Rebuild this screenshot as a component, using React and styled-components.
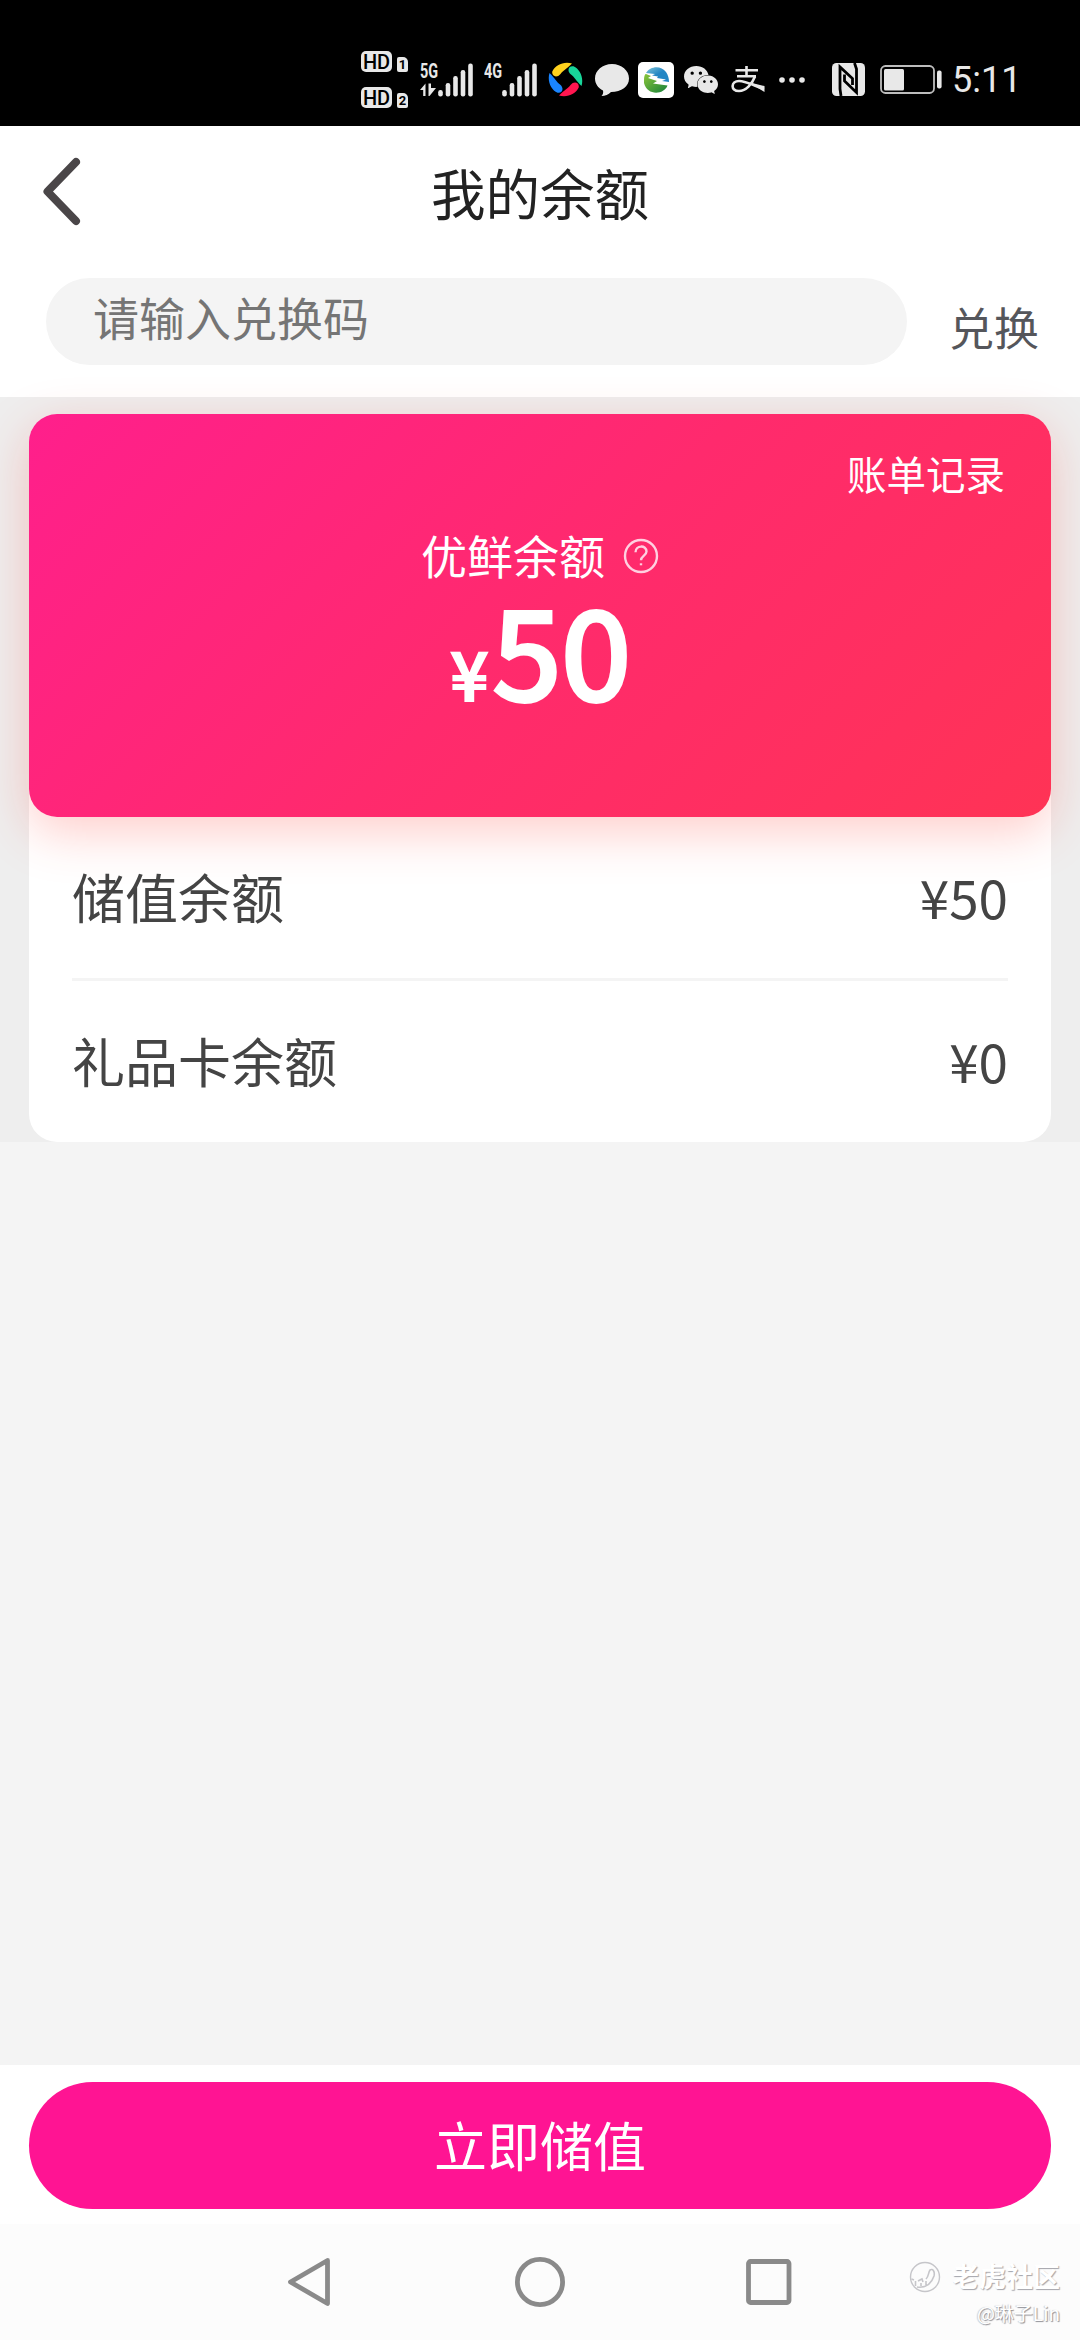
import React from 'react'
import styled, { createGlobalStyle } from 'styled-components'
// Icons
import { SiWechat } from 'react-icons/si'

function App() {
    return (
        <>
            <GlobalStyle />
            <Page>
                <StatusBar />
                <Header>
                    <BackIcon viewBox="0 0 40 70">
                        <path d="M35 5 L6.500 34.500 L35 64" />
                    </BackIcon>
                    <Title>我的余额</Title>
                </Header>
                <Redeem>
                    <CodeInput placeholder="请输入兑换码" />
                    <RedeemButton>兑换</RedeemButton>
                </Redeem>
                <Balance>
                    <Panel>
                        <Card>
                            <Records>账单记录</Records>
                            <CardLabel>
                                优鲜余额
                                <HelpIcon viewBox="0 0 36 36">
                                    <circle cx="18" cy="18" r="16" />
                                    <path d="M12.500 14.200 C12.500 6.800 23.500 6.800 23.500 13.600 C23.500 17.500 18 17.800 18 22.300" />
                                    <path d="M18 25.300 V27.300" />
                                </HelpIcon>
                            </CardLabel>
                            <Amount>
                                <small>¥</small>50
                            </Amount>
                        </Card>
                        <List>
                            <Row>
                                <span>储值余额</span>
                                <span>¥50</span>
                            </Row>
                            <Row>
                                <span>礼品卡余额</span>
                                <span>¥0</span>
                            </Row>
                        </List>
                    </Panel>
                </Balance>
                <Footer>
                    <PayButton>立即储值</PayButton>
                </Footer>
                <NavBar>
                    <NavIcon viewBox="0 0 50 50">
                        <path d="M41.500 3.500 L4.500 25 L41.500 46.500 Z" />
                    </NavIcon>
                    <NavIcon viewBox="0 0 50 50">
                        <circle cx="25" cy="25" r="22.600" />
                    </NavIcon>
                    <NavIcon viewBox="0 0 50 50">
                        <rect x="4.500" y="4.500" width="40.500" height="41" rx="2" />
                    </NavIcon>
                    <Watermark />
                </NavBar>
            </Page>
        </>
    )
}

const petals = ['#ffd21e', '#18d69a', '#ff1650', '#1a85ff']

function StatusBar() {
    return (
        <StatusWrapper>
            <HdGroup>
                <HdLine>
                    <Hd>HD</Hd>
                    <Sim>1</Sim>
                </HdLine>
                <HdLine>
                    <Hd>HD</Hd>
                    <Sim>2</Sim>
                </HdLine>
            </HdGroup>
            <Signal label="5G" arrows ml={12} />
            <Signal label="4G" ml={10} />
            <Icon w={35} h={35} ml={10} viewBox="0 0 35 35">
                {petals.map((color, i) => (
                    <path
                        key={color}
                        fill={color}
                        transform={`rotate(${i * 90} 17.5 17.5)`}
                        d="M24 1.500 C16 -1 7 3 4.300 9.500 C3.300 14.500 9 16.500 12.500 12 C15 8.500 18 7.500 24 1.500 Z"
                    />
                ))}
            </Icon>
            <Icon w={34} h={32} ml={12} viewBox="0 0 34 32">
                <path fill="#e8e8e8" d="M17 0 C26.500 0 34 6.500 34 14.500 C34 22.500 26.500 28 16 28 C13.500 30.500 10 32 6.500 32 C8 30.500 8.500 28.500 8 26.500 C3 24 0 19.500 0 14.500 C0 6.500 7.500 0 17 0 Z" />
            </Icon>
            <Icon w={36} h={36} ml={9} viewBox="0 0 36 36">
                <defs>
                    <linearGradient id="sky" x1="0" y1="0" x2="1" y2="1">
                        <stop offset="0" stopColor="#7fc4d8" />
                        <stop offset="0.5" stopColor="#2386c4" />
                    </linearGradient>
                    <linearGradient id="land" x1="0" y1="0" x2="1" y2="1">
                        <stop offset="0" stopColor="#8bc63a" />
                        <stop offset="1" stopColor="#17803a" />
                    </linearGradient>
                </defs>
                <rect width="36" height="36" rx="5" fill="#fff" />
                <path fill="url(#sky)" d="M8 11 C12 4 23 3 28 10 C30 13 31 16 31 20 L24 19 L28 17.500 L19 16 L20 14.500 L14 13.500 L17 12 Z" />
                <path fill="url(#land)" d="M6 18 C6 14 7 11.500 8 12 L13 14 L10 16 L19 19 L15 21.500 L29.500 23.500 C26 33 9 34 6 21 Z" />
            </Icon>
            <WechatIcon />
            <Icon w={34} h={27} ml={13} viewBox="0 0 34 27">
                <g fill="none" stroke="#e8e8e8" strokeWidth="2.600">
                    <path d="M4.500 4.300 H27 M15.500 0 V10 M6 10.300 H25" />
                    <path d="M24 10.500 C21 18 15 25 8 25 C-1 25 0 15 8 15 C15 15 24 20 33 23" />
                </g>
                <path fill="#e8e8e8" d="M18 16.200 L33.500 20 V26 Z" />
            </Icon>
            <Icon w={26} h={6} ml={14} viewBox="0 0 26 6">
                <circle cx="3" cy="3" r="2.800" fill="#e8e8e8" />
                <circle cx="13" cy="3" r="2.800" fill="#e8e8e8" />
                <circle cx="23" cy="3" r="2.800" fill="#e8e8e8" />
            </Icon>
            <Icon w={33} h={33} ml={27} viewBox="0 0 33 33">
                <rect width="33" height="33" rx="4.500" fill="#e8e8e8" />
                <g fill="none" stroke="#000" strokeWidth="2.800">
                    <path d="M9 33 L8 26 V4 L20.500 15.500 V22" />
                    <path d="M22.500 0 L24.500 6 V29.500 L12.500 18 V11.500" />
                </g>
            </Icon>
            <Icon w={62} h={29} ml={15} viewBox="0 0 62 29">
                <rect x="1" y="1" width="53" height="27" rx="4.500" fill="none" stroke="#bdbdbd" strokeWidth="1.800" />
                <rect x="4" y="4" width="20" height="21.500" rx="1.500" fill="#e8e8e8" />
                <rect x="57" y="5.500" width="4.600" height="18" rx="2" fill="#e8e8e8" />
            </Icon>
            <Clock>5:11</Clock>
        </StatusWrapper>
    )
}

function Signal({ label, arrows, ml }) {
    const tops = [27, 20, 13, 7, 0.5]
    return (
        <SignalWrapper $ml={ml}>
            <Network>{label}</Network>
            <Bars viewBox="0 0 54 34">
                {arrows && (
                    <path fill="#e8e8e8" d="M0 27 L5.500 20.500 V33 H3.200 V27 Z M8.500 20.500 H11 V25 H16 L9.500 33 H8.500 Z" />
                )}
                {tops.map((y, i) => (
                    <rect key={y} x={18.200 + i * 7.500} y={y} width="4.600" height={33.500 - y} rx="2.200" fill="#e8e8e8" />
                ))}
            </Bars>
        </SignalWrapper>
    )
}

function Watermark() {
    return (
        <WatermarkWrapper>
            <Brand>
                <svg width="32" height="32" viewBox="0 0 32 32" fill="none" stroke="#c6c6ca">
                    <circle cx="16" cy="16" r="14.500" strokeWidth="1.400" />
                    <path d="M2.500 18 L5 19 M6.500 20 V25 M9 20 L13 18 L14 21 M8 26 C16 27 22 24 25 15 C26 11 24 7 21 9 C19 12 20 15 17 18 M12 22 V25 M17 20 V24" strokeWidth="1.600" />
                </svg>
                <span>老虎社区</span>
            </Brand>
            <Author>@琳子Lin</Author>
        </WatermarkWrapper>
    )
}

const Icon = ({ w, h, ml, children, ...rest }) => (
    <IconSvg $w={w} $h={h} $ml={ml} {...rest}>
        {children}
    </IconSvg>
)

const GlobalStyle = createGlobalStyle`
    * {
        box-sizing: border-box;
    }
    body {
        margin: 0;
        background: #f4f4f4;
        font-family: 'Noto Sans CJK SC', sans-serif;
    }
`
const Page = styled.div`
    width: 1080px;
    height: 2340px;
    display: flex;
    flex-direction: column;
    background: #f4f4f4;
    overflow: hidden;
`
const StatusWrapper = styled.div`
    height: 126px;
    flex: none;
    display: flex;
    align-items: center;
    padding: 33px 0 0 361px;
    background: #000;
    color: #e8e8e8;
`
const HdGroup = styled.div`
    display: flex;
    flex-direction: column;
    gap: 15px;
`
const HdLine = styled.div`
    display: flex;
    align-items: flex-end;
    gap: 5px;
`
const Hd = styled.span`
    width: 31px;
    height: 21px;
    border-radius: 5px;
    background: #e8e8e8;
    color: #000;
    font: 500 20px/22px Roboto, sans-serif;
    text-align: center;
`
const Sim = styled.span`
    width: 11px;
    height: 15px;
    border-radius: 2px 5px 2px 2px;
    background: #e8e8e8;
    color: #000;
    font: 700 13px/15px Roboto, sans-serif;
    text-align: center;
`
const SignalWrapper = styled.div`
    display: flex;
    width: 54px;
    height: 34px;
    margin-left: ${(p) => p.$ml}px;
`
const Network = styled.span`
    width: 0;
    font: 700 20px/17px Roboto, sans-serif;
    transform: scaleX(0.72);
    transform-origin: left;
    height: 16px;
    white-space: nowrap;
`
const Bars = styled.svg`
    width: 54px;
    height: 34px;
    flex: none;
`
const IconSvg = styled.svg`
    width: ${(p) => p.$w}px;
    height: ${(p) => p.$h}px;
    margin-left: ${(p) => p.$ml}px;
    flex: none;
`
const WechatIcon = styled(SiWechat)`
    width: 34px;
    height: 34px;
    margin-left: 10px;
    color: #e8e8e8;
    flex: none;
`
const Clock = styled.span`
    margin-left: 10px;
    font: 400 36px/36px Roboto, sans-serif;
`
const Header = styled.header`
    height: 132px;
    flex: none;
    display: grid;
    grid-template-columns: 1fr auto 1fr;
    align-items: center;
    padding: 0 41px;
    background: #fff;
`
const BackIcon = styled.svg`
    width: 40px;
    height: 70px;
    fill: none;
    stroke: #4a4648;
    stroke-width: 8;
    stroke-linecap: round;
    stroke-linejoin: round;
`
const Title = styled.h1`
    margin: 0;
    font-size: 54.500px;
    font-weight: 400;
    line-height: 80px;
    color: #222;
`
const Redeem = styled.div`
    height: 139px;
    flex: none;
    display: flex;
    align-items: flex-start;
    padding: 20px 40px 0 46px;
    background: #fff;
`
const CodeInput = styled.input`
    width: 861px;
    height: 87px;
    padding: 0 47px 12px;
    border: 0;
    outline: 0;
    border-radius: 44px;
    background: #f4f4f4;
    font: inherit;
    font-size: 46px;
    &::placeholder {
        color: #757575;
        opacity: 1;
    }
`
const RedeemButton = styled.span`
    margin: 19px 0 0 42px;
    font-size: 45px;
    line-height: 60px;
    color: #55565b;
    white-space: nowrap;
`
const Balance = styled.section`
    flex: none;
    padding: 17px 29px 0;
    background: #eee;
`
const Panel = styled.div`
    border-radius: 28px;
    background: #fff;
`
const Card = styled.div`
    height: 403px;
    display: flex;
    flex-direction: column;
    align-items: center;
    padding: 30px 46px 0;
    border-radius: 28px;
    background: linear-gradient(135deg, #ff1f8c 0%, #ff2a6d 50%, #ff3355 100%);
    box-shadow: 0 15px 50px rgba(255, 60, 50, 0.26);
    color: #fff;
`
const Records = styled.div`
    align-self: flex-end;
    font-size: 39.500px;
    line-height: 58px;
`
const CardLabel = styled.div`
    display: flex;
    align-items: center;
    gap: 18px;
    margin-top: 22px;
    font-size: 46px;
    line-height: 60px;
`
const HelpIcon = styled.svg`
    width: 36px;
    height: 36px;
    margin-top: 4px;
    fill: none;
    stroke: #ffd0e0;
    stroke-width: 2.4;
`
const Amount = styled.div`
    margin-top: -7px;
    font-size: 125px;
    font-weight: 500;
    line-height: 140px;
    letter-spacing: -2px;
    -webkit-text-stroke: 2px #fff;
    small {
        margin-right: 5px;
        font-size: 67px;
    }
`
const List = styled.div`
    padding: 0 43px;
`
const Row = styled.div`
    display: flex;
    align-items: center;
    justify-content: space-between;
    height: 161px;
    padding-bottom: 3px;
    font-size: 53px;
    line-height: 78px;
    color: #444;
    & + & {
        height: 164px;
        border-top: 3px solid #f4f4f4;
    }
`
const Footer = styled.footer`
    flex: none;
    height: 159px;
    margin-top: auto;
    padding: 17px 29px 0;
    background: #fff;
`
const PayButton = styled.button`
    width: 100%;
    height: 127px;
    padding: 0 0 3px;
    border: 0;
    border-radius: 64px;
    background: #ff1493;
    color: #fff;
    font: inherit;
    font-size: 53px;
    line-height: 78px;
`
const NavBar = styled.nav`
    position: relative;
    flex: none;
    display: flex;
    justify-content: center;
    gap: 179px;
    height: 116px;
    padding-top: 33px;
    background: #fcfcfc;
`
const NavIcon = styled.svg`
    width: 50px;
    height: 50px;
    fill: none;
    stroke: #8a8a8a;
    stroke-width: 4.8;
    stroke-linejoin: round;
`
const WatermarkWrapper = styled.div`
    position: absolute;
    right: 20px;
    top: 33px;
    display: flex;
    flex-direction: column;
    align-items: flex-end;
    color: #fff;
`
const Brand = styled.div`
    display: flex;
    align-items: center;
    gap: 11px;
    height: 40px;
    font-size: 27px;
    font-weight: 700;
    text-shadow: 1px 1px 1px #a4a4aa;
    span {
        margin-top: -3px;
    }
`
const Author = styled.div`
    font-size: 19px;
    line-height: 32px;
    text-shadow: 1px 1px 1px #909096, -1px 0 1px #ccc;
`

export default App
